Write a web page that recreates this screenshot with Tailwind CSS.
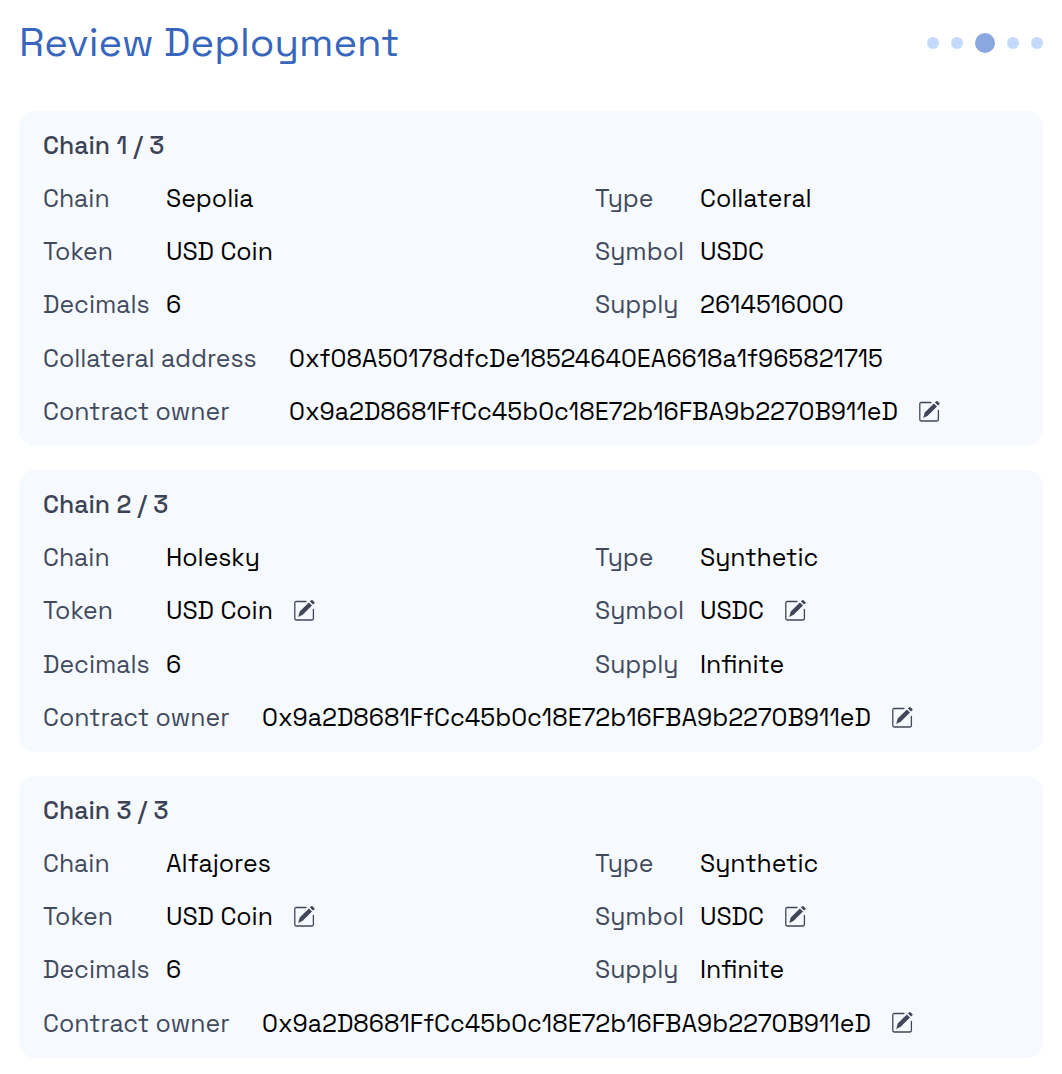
<!DOCTYPE html>
<html lang="en">
<head>
<meta charset="utf-8">
<title>Review Deployment</title>
<script src="https://cdn.jsdelivr.net/npm/@tailwindcss/browser@4"></script>
</head>
<body class="bg-white font-['Space_Grotesk',Inter,sans-serif] text-[24.79px] text-black whitespace-nowrap">
<svg class="hidden">
  <symbol id="edit" viewBox="0 0 21 21">
    <path d="M12 1.5H2.2Q.8 1.5 .8 2.9V18.6Q.8 20 2.2 20H18Q19.4 20 19.4 18.6V9.3" fill="none" stroke="currentColor" stroke-width="1.3" stroke-linecap="round"/>
    <path d="M14.9 2.4L18 5.5L8.7 14.7L4.2 16.9L5.7 11.6ZM15.9 1.5L17.1.3Q18-.3 18.8.5L20.3 2Q20.9 2.7 20.3 3.4L19 4.6Z" fill="currentColor"/>
  </symbol>
</svg>
<main class="px-[19px]">
  <header class="flex h-[111px] items-start justify-between pt-[18px]">
    <h1 class="text-[40px] leading-[50px] text-[#3766bc]">Review Deployment</h1>
    <div class="flex h-[50px] items-center gap-3">
      <i class="size-3 rounded-full bg-[#c4dafc]"></i>
      <i class="size-3 rounded-full bg-[#c4dafc]"></i>
      <i class="size-5 rounded-full bg-[#8aa7df]"></i>
      <i class="size-3 rounded-full bg-[#c4dafc]"></i>
      <i class="size-3 rounded-full bg-[#c4dafc]"></i>
    </div>
  </header>
  <div id="cards" class="flex flex-col gap-[24.4px]"></div>
</main>
<script>
const icon = '<svg class="mb-[0.9px] ml-[21.4px] size-[21px] text-[#3f4758]"><use href="#edit"/></svg>';
const owner = '0x9a2D8681FfCc45b0c18E72b16FBA9b2270B911eD';
const cell = (label, value, width, edit) =>
  `<div class="flex items-center"><span class="${width} text-[#414a5c]">${label}</span><span>${value}</span>${edit ? icon : ''}</div>`;
const L = 'w-[123px]', R = 'w-[105px]';
const card = (n, chain, type, supply, editable, address) => `
<section class="rounded-2xl bg-[#f6f9fe] px-6 py-[7.5px]">
  <h2 class="flex h-[53.3px] items-center font-medium text-[#3b4354]">Chain ${n} / 3</h2>
  <div class="grid grid-cols-[552px_1fr] auto-rows-[53.3px]">
    ${cell('Chain', chain, L)}${cell('Type', type, R)}
    ${cell('Token', 'USD Coin', L, editable)}${cell('Symbol', 'USDC', R, editable)}
    ${cell('Decimals', '6', L)}${cell('Supply', supply, R)}
  </div>
  <div class="grid auto-rows-[53.3px]">
    ${address ? cell('Collateral address', address, 'w-[246px]') : ''}
    ${cell('Contract owner', owner, address ? 'w-[246px]' : 'w-[219px]', true)}
  </div>
</section>`;
document.getElementById('cards').innerHTML =
  card(1, 'Sepolia', 'Collateral', '2614516000', false, '0xf08A50178dfcDe18524640EA6618a1f965821715') +
  card(2, 'Holesky', 'Synthetic', 'Infinite', true) +
  card(3, 'Alfajores', 'Synthetic', 'Infinite', true);
</script>
</body>
</html>
